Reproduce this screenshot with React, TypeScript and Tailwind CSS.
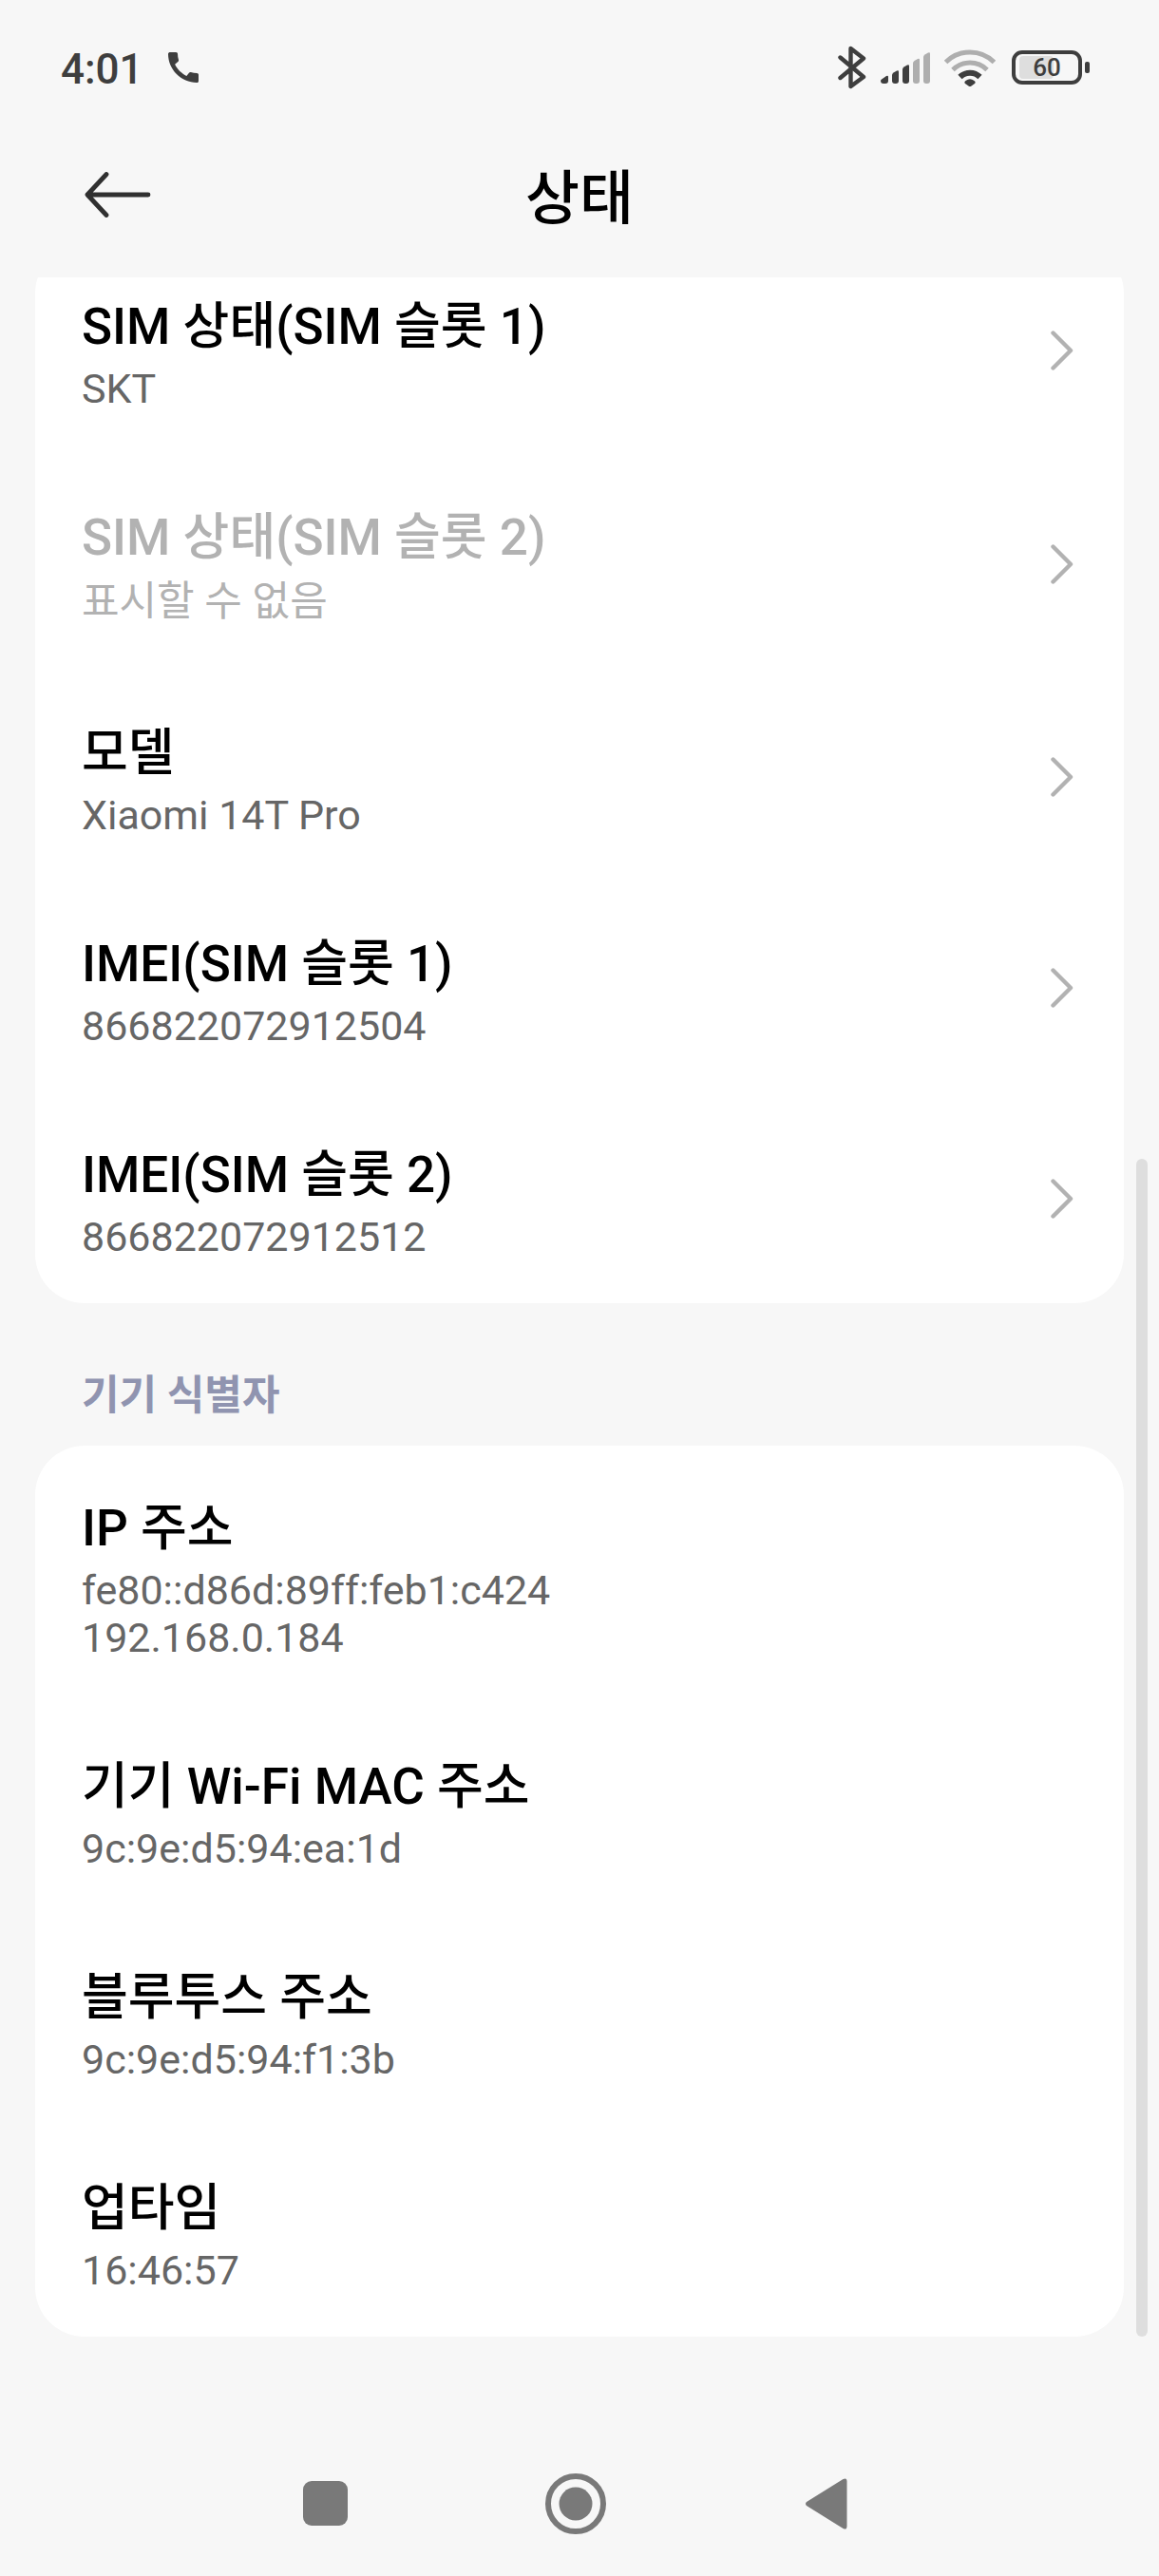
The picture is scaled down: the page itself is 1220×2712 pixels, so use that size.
import { useState } from 'react'

type Item = {
  id: string
  title: string
  lines: string[]
  link?: boolean
  disabled?: boolean
}

const SIM_ITEMS: Item[] = [
  { id: 'sim1', title: 'SIM 상태(SIM 슬롯 1)', lines: ['SKT'], link: true },
  { id: 'sim2', title: 'SIM 상태(SIM 슬롯 2)', lines: ['표시할 수 없음'], link: true, disabled: true },
  { id: 'model', title: '모델', lines: ['Xiaomi 14T Pro'], link: true },
  { id: 'imei1', title: 'IMEI(SIM 슬롯 1)', lines: ['866822072912504'], link: true },
  { id: 'imei2', title: 'IMEI(SIM 슬롯 2)', lines: ['866822072912512'], link: true },
]

const DEVICE_ITEMS: Item[] = [
  { id: 'ip', title: 'IP 주소', lines: ['fe80::d86d:89ff:feb1:c424', '192.168.0.184'] },
  { id: 'wifi', title: '기기 Wi-Fi MAC 주소', lines: ['9c:9e:d5:94:ea:1d'] },
  { id: 'bt', title: '블루투스 주소', lines: ['9c:9e:d5:94:f1:3b'] },
  { id: 'uptime', title: '업타임', lines: ['16:46:57'] },
]

function StatusBar() {
  return (
    <div className="flex h-[142px] items-center pl-16 pr-[73px] text-[#3e3e3e]">
      <span className="pt-[3px] text-[44px] font-medium leading-[52px]">4:01</span>
      <svg className="ml-[26px] h-8 w-8" viewBox="3 3 18 18" fill="currentColor">
        <path d="M20.01 15.38c-1.23 0-2.42-.2-3.53-.56a.977.977 0 0 0-1.01.24l-1.57 1.97c-2.83-1.35-5.48-3.9-6.89-6.83l1.95-1.66c.27-.28.35-.67.24-1.02-.37-1.11-.56-2.3-.56-3.53 0-.54-.45-.99-.99-.99H4.19C3.65 3 3 3.24 3 3.99 3 13.28 10.73 21 20.01 21c.71 0 .99-.63.99-1.18v-3.45c0-.54-.45-.99-.99-.99z" />
      </svg>

      <div className="ml-auto flex items-center">
        <svg className="h-[46px] w-[30px]" viewBox="0 0 30 46" fill="none" stroke="currentColor" strokeWidth="4.4" strokeLinecap="round" strokeLinejoin="round">
          <path d="M2.5 12.5 27 33 13.5 43V3L27 13.5 2.5 34" />
        </svg>
        <svg className="ml-[15px] h-[34px] w-[53px]" viewBox="0 0 53 34" fill="currentColor">
          <path d="M1 29.5 6 26q2-1 2 1v4q0 3-3 3H3q-3 0-3-3 0-1 1-1.500z" />
          <path d="M12 25q0-1.500 1.500-2.500l3.500-2q2-1 2 1V31q0 3-3 3h-1q-3 0-3-3z" />
          <path d="M23 19q0-1.500 1.500-2.500l3.500-2q2-1 2 1V31q0 3-3 3h-1q-3 0-3-3z" />
          <g fill="#aeaeae">
            <path d="M34 12.500q0-1.500 1.500-2.500L39 8q2-1 2 1v22q0 3-3 3h-1q-3 0-3-3z" />
            <path d="M45 6q0-1.500 1.500-2.500L50 1.500q2-1 2 1V31q0 3-3 3h-1q-3 0-3-3z" />
          </g>
        </svg>
        <svg className="ml-[14px] h-10 w-[54px]" viewBox="0 0 54 40" fill="none" strokeWidth="5">
          <path stroke="#aeaeae" d="M1.500 14.500a36 36 0 0 1 51 0" />
          <path stroke="#aeaeae" d="M9 22.500a25.500 25.500 0 0 1 36 0" />
          <path stroke="currentColor" strokeWidth="6" d="M16.500 30a15 15 0 0 1 21 0" />
          <path fill="currentColor" d="M22.500 34q4.500-3.500 9 0 2 1.500.5 3l-3.500 2.500q-1.500 1-3 0L22 37q-1.500-1.500.5-3z" />
        </svg>
        <div className="ml-[17px] flex items-center gap-[3px]">
          <div className="relative flex h-9 w-[74px] items-center justify-center rounded-[11px] border-4 border-[#3e3e3e]">
            <div className="absolute inset-y-[2px] left-1 w-9 rounded-[4px] bg-[#dedede]" />
            <span className="relative text-[26px] font-medium leading-7">60</span>
          </div>
          <div className="h-3 w-[5px] rounded-[2px] bg-[#3e3e3e]" />
        </div>
      </div>
    </div>
  )
}

function Row({ item, onOpen }: { item: Item; onOpen: (id: string) => void }) {
  const content = (
    <>
      <div className="min-w-0 flex-1">
        <div className={`text-[53px] font-medium leading-[80px] ${item.disabled ? 'text-[#b2b2b2]' : 'text-black'}`}>
          {item.title}
        </div>
        {item.lines.map((line) => (
          <div
            key={line}
            className={`text-[43px] ${item.disabled ? 'leading-[55px] text-[#b2b2b2]' : 'leading-[50px] text-[#666666]'}`}
          >
            {line}
          </div>
        ))}
      </div>
      {item.link && (
        <svg className="h-[42px] w-6 shrink-0" viewBox="0 0 24 42" fill="none" stroke="#b2b2b2" strokeWidth="4.4" strokeLinecap="round" strokeLinejoin="round">
          <path d="M2.500 2.500 21 21 2.500 39.500" />
        </svg>
      )}
    </>
  )

  if (item.link) {
    return (
      <button
        type="button"
        disabled={item.disabled}
        onClick={() => onOpen(item.id)}
        className="flex w-full items-center pb-[45px] pl-[49px] pr-[53px] pt-[47px] text-left"
      >
        {content}
      </button>
    )
  }
  return <div className="flex items-center pb-[45px] pl-[49px] pr-[53px] pt-[47px]">{content}</div>
}

export default function App() {
  const [, setOpened] = useState('')

  return (
    <div lang="ko" className="relative flex min-h-screen flex-col bg-[#f7f7f7] font-['Roboto','Noto_Sans_CJK_KR',sans-serif]">
      <header className="relative z-10 bg-[#f7f7f7]">
        <StatusBar />
        <div className="grid h-[150px] grid-cols-[1fr_auto_1fr] items-start px-[88px] pt-[26px]">
          <button type="button" aria-label="뒤로" className="flex h-[74px] w-[72px] items-center">
            <svg className="h-12 w-[72px]" viewBox="0 0 72 48" fill="none" stroke="#303030" strokeWidth="4.800" strokeLinecap="round" strokeLinejoin="round">
              <path d="M24 2.500 4 24l20 21.500M4 24h64" />
            </svg>
          </button>
          <h1 className="text-[62px] font-medium leading-[84px] text-black">상태</h1>
        </div>
      </header>

      {/* first card is scrolled partly under the header */}
      <main className="-mt-[35px] px-[37px] pb-[99px]">
        <section className="rounded-[52px] bg-white">
          {SIM_ITEMS.map((item) => (
            <Row key={item.id} item={item} onOpen={setOpened} />
          ))}
        </section>

        <h2 className="pb-[23px] pl-[49px] pt-[67px] text-[43px] font-bold leading-[60px] text-[#9094b0]">기기 식별자</h2>

        <section className="rounded-[52px] bg-white">
          {DEVICE_ITEMS.map((item) => (
            <Row key={item.id} item={item} onOpen={setOpened} />
          ))}
        </section>
      </main>

      {/* scroll thumb */}
      <div className="absolute bottom-[252px] right-3 h-[1240px] w-3 rounded-full bg-[#dedede]" />

      <nav className="mt-auto flex h-[153px] items-center justify-center gap-[200px] pr-2 text-[#797979]">
        <button type="button" aria-label="최근 앱" className="flex w-16 justify-center">
          <span className="h-[47px] w-[47px] rounded-[9px] bg-[#797979]" />
        </button>
        <button type="button" aria-label="홈" className="flex w-16 justify-center">
          <svg className="h-16 w-16" viewBox="0 0 64 64">
            <circle cx="32" cy="32" r="29" fill="none" stroke="currentColor" strokeWidth="6" />
            <circle cx="32" cy="32" r="17.500" fill="currentColor" />
          </svg>
        </button>
        <button type="button" aria-label="뒤로 가기" className="flex w-16 justify-center">
          <svg className="h-[54px] w-11" viewBox="0 0 44 54" fill="currentColor">
            <path d="M1 25 39.500 1q4-2 4 2.500v47q0 4.500-4 2.500L1 29q-2-2 0-4z" />
          </svg>
        </button>
      </nav>
    </div>
  )
}
